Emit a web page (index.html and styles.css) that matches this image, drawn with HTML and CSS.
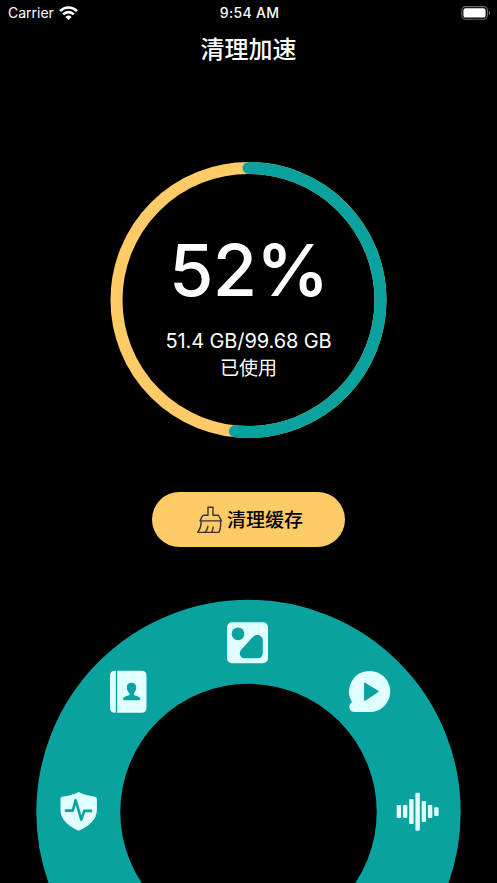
FILE: index.html
```html
<!DOCTYPE html>
<html lang="zh-CN">
<head>
<meta charset="utf-8">
<title>清理加速</title>
<link rel="stylesheet" href="styles.css">
</head>
<body>
<div class="screen">
  <header class="status">
    <div class="carrier"><span>Carrier</span>
      <svg class="wifi" width="19" height="14" viewBox="0 0 19 14" fill="none" stroke="#fff" stroke-width="2.6">
        <path d="M1.100 5a12 12 0 0 1 16.800 0M4.200 8.300a7.500 7.500 0 0 1 10.600 0"/>
        <path d="M9.500 14 6.400 10.900a4.400 4.400 0 0 1 6.200 0Z" fill="#fff" stroke="none"/>
      </svg>
    </div>
    <div class="time">9:54 AM</div>
    <div class="power">
      <svg width="30" height="14" viewBox="0 0 30 14">
        <rect x=".8" y=".6" width="25.6" height="12.6" rx="3.6" fill="none" stroke="#686868" stroke-width="1.1"/>
        <rect x="2.4" y="2.2" width="22.2" height="9.4" rx="2.2" fill="#fff"/>
        <path d="M27.8 4.8c1.7.7 1.7 3.6 0 4.3Z" fill="#686868"/>
      </svg>
    </div>
  </header>
  <h1 class="title">清理加速</h1>
  <section class="gauge">
    <svg class="gauge-ring" width="277" height="276" viewBox="0 0 277 276" fill="none" stroke-width="12">
      <circle cx="138.500" cy="138" r="132" stroke="#ffcb66"/>
      <circle cx="138.500" cy="138" r="132" stroke="#0aa29f" stroke-linecap="round" stroke-dasharray="428.200 829.400" transform="rotate(-90 138.500 138)"/>
    </svg>
    <div class="percent">52<span class="sign">%</span></div>
    <div class="usage">51.4 GB/99.68 GB</div>
    <div class="used">已使用</div>
  </section>
  <button class="clean">
    <svg width="26" height="28" viewBox="0 0 26 28" fill="none" stroke="#38352f" stroke-width="1.4" stroke-linejoin="round" stroke-linecap="round">
      <path d="M11 9.2V1.2h5v8h5.4l3.1 5.700H3.100l1.900-4.300q.6-1.400 2-1.400ZM4.100 15c.3 4.300-1 8.100-3.300 11.400h21.100c1.600-3 2.100-7.100 1.600-11.400M10.900 20.300q-.5 3.500-2.700 6M16.100 20.900q-.1 3-1.500 5.300"/>
    </svg>
    <span class="label">清理缓存</span>
  </button>
  <nav class="dial">
    <svg width="425" height="284" viewBox="0 0 425 284">
      <circle cx="212.5" cy="213" r="170.200" fill="none" stroke="#0aa29f" stroke-width="84"/>
      <g transform="translate(191 23.300)">
        <rect width="41" height="41" rx="5" fill="#e0ffff"/>
        <circle cx="11" cy="11.500" r="6.400" fill="#0aa29f"/>
        <path d="M26 14.500c3.600-3.600 9.800-1.500 9.800 3.500v12.500q0 5.500-5.500 5.500H18c-5.200 0-6.800-5.400-3.400-9Z" fill="#0aa29f"/>
      </g>
      <g transform="translate(74 71.800)">
        <path d="M5.800 0v42H5Q0 42 0 37V5Q0 0 5 0ZM7.200 0h24.300q5 0 5 5v32q0 5-5 5H7.200Z" fill="#e0ffff"/>
        <path d="M21.500 11.900c6.300 0 5.500 7.800 2.300 10.600v1.700c3.500 1.300 6.500 1.800 6.500 4.200q0 1-1.500 1H14.500q-1.500 0-1.500-1c0-2.400 3-2.900 6.500-4.200v-1.700c-3.400-2.800-4.300-10.600 2-10.600Z" fill="#0aa29f"/>
      </g>
      <g transform="translate(313 72)">
        <path d="M20.800 0a20.400 20.400 0 0 1 0 41H5.500C.3 41-1.800 34.500 3 31A20.400 20.400 0 0 1 20.800 0Z" fill="#e0ffff"/>
        <path d="M15.800 12.300 28.800 20.500 15.800 29Z" fill="#0aa29f" stroke="#0aa29f" stroke-width="1.500" stroke-linejoin="round"/>
      </g>
      <g transform="translate(24.500 193)">
        <path d="M18.200 0c4.800 2.600 10.400 3.800 16.500 4.800q1.700.3 1.700 2V18c0 9.500-8 16.500-18.200 20.700C8 34.500 0 27.500 0 18V6.800Q0 5.100 1.700 4.800C7.800 3.800 13.400 2.600 18.200 0Z" fill="#e0ffff"/>
        <path d="M5.400 18.600h6.900l2.800-10.400 5.700 19.400 3-8.700h6.700" fill="none" stroke="#0aa29f" stroke-width="2.600" stroke-linejoin="round" stroke-linecap="round"/>
      </g>
      <g transform="translate(360.700 193.700)" fill="#e0ffff">
        <rect y="12.300" width="4.300" height="13" rx="1"/>
        <rect x="6.200" y="12.300" width="4.400" height="13" rx="1"/>
        <rect x="12.500" y="6.200" width="4.400" height="25.200" rx="1"/>
        <rect x="18.700" width="4.400" height="38" rx="1"/>
        <rect x="25" y="8.200" width="4.300" height="21" rx="1"/>
        <rect x="31.200" y="12.300" width="4.400" height="13" rx="1"/>
        <rect x="37.500" y="14.500" width="4.400" height="8.700" rx="1"/>
      </g>
    </svg>
  </nav>
</div>
</body>
</html>
```
FILE: styles.css
```css
* { box-sizing: border-box; }
body {
  margin: 0;
  background: #000;
  color: #fff;
  font-family: Inter, "Noto Sans CJK SC", sans-serif;
}
.screen {
  width: 497px;
  height: 883px;
  overflow: hidden;
  display: flex;
  flex-direction: column;
  align-items: center;
}
.status {
  width: 100%;
  height: 26px;
  padding: 0 6px 0 8px;
  display: grid;
  grid-template-columns: 1fr auto 1fr;
  align-items: center;
  font-size: 14px;
  line-height: 26px;
}
.carrier {
  display: flex;
  align-items: center;
  gap: 5px;
}
.wifi { margin-top: -1px; }
.time { font-weight: 500; letter-spacing: .3px; }
.power { display: flex; justify-content: flex-end; }
.title {
  margin: 6px 0 0;
  height: 36px;
  font-size: 24px;
  line-height: 36px;
  font-weight: 500;
}
.gauge {
  width: 277px;
  height: 276px;
  margin-top: 94px;
  position: relative;
  flex: none;
  display: flex;
  flex-direction: column;
  align-items: center;
  white-space: nowrap;
}
.gauge-ring { position: absolute; inset: 0; }
.percent {
  margin-top: 63px;
  height: 90px;
  font-size: 72px;
  line-height: 90px;
  font-weight: 500;
  letter-spacing: -.7px;
}
.sign { font-weight: 600; }
.usage {
  margin-top: 13px;
  height: 27px;
  font-size: 20px;
  line-height: 27px;
  letter-spacing: -.1px;
}
.used {
  height: 27px;
  font-size: 19px;
  line-height: 27px;
}
.clean {
  flex: none;
  width: 193px;
  height: 55px;
  margin-top: 54px;
  padding: 0 0 0 3px;
  border: 0;
  border-radius: 28px;
  background: #ffcb66;
  color: #000;
  font: 500 19px/28px Inter, "Noto Sans CJK SC", sans-serif;
  display: flex;
  align-items: center;
  justify-content: center;
  gap: 4px;
}
.label { padding-top: 2px; }
.dial {
  flex: none;
  width: 425px;
  height: 284px;
  margin-top: 52px;
}
.dial svg { display: block; }
```
